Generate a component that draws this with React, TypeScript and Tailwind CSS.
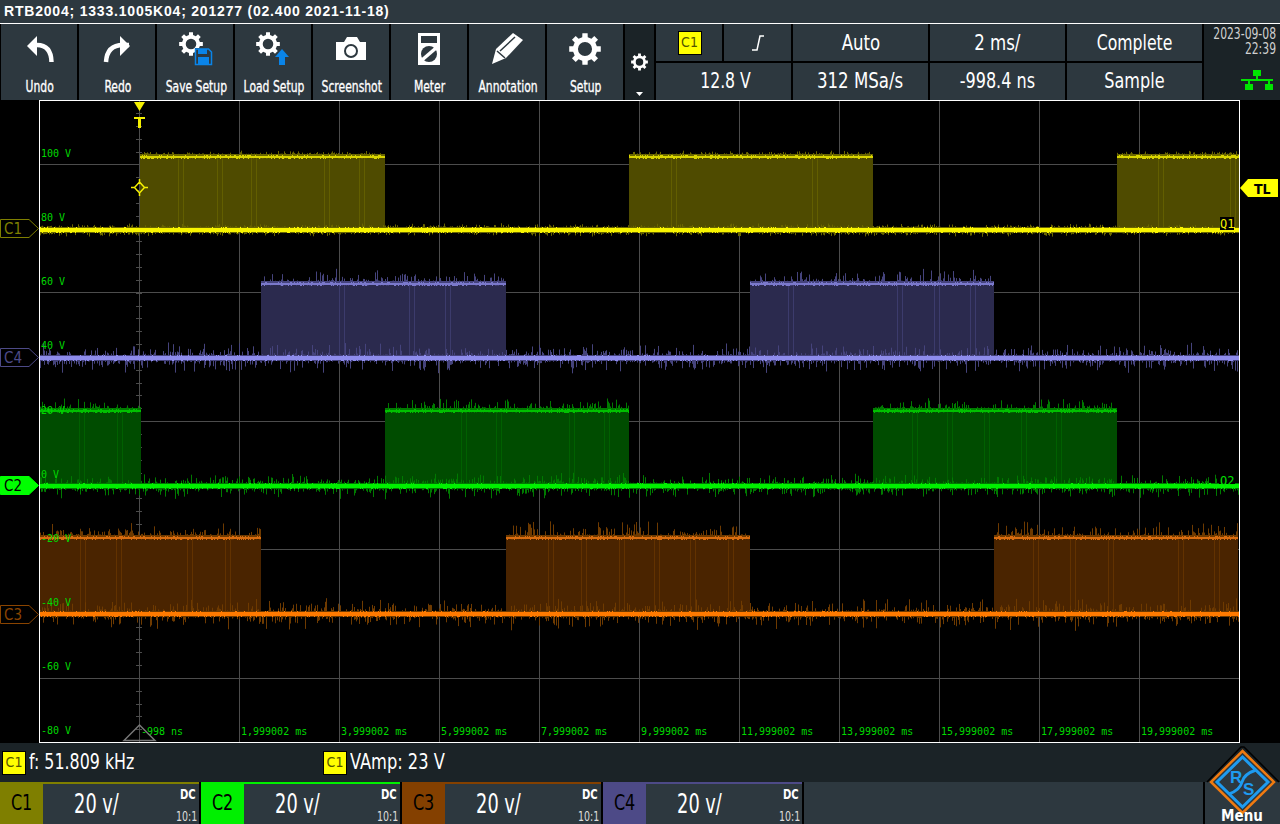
import React, { useMemo } from "react";

function rng(seed: number) {
  let s = seed >>> 0;
  return () => {
    s = (s * 1664525 + 1013904223) >>> 0;
    return s / 4294967296;
  };
}

type Trace = {
  seed: number;
  line: string;
  topLine: string;
  fill: string;
  stripe: string;
  dim: string;
  top: number;
  base: number;
  on: [number, number][];
  spike: number;
};

const TRACES: Trace[] = [
  { seed: 11, line: "#f8f400", topLine: "#d8d400", fill: "#4f4b00", stripe: "#625e00", dim: "#6a6600", top: 156, base: 230, on: [[140, 385], [629, 873], [1117, 1239]], spike: 4 },
  { seed: 47, line: "#8e8cec", topLine: "#7b79cc", fill: "#2b2a4e", stripe: "#3c3b6c", dim: "#45437c", top: 283, base: 358, on: [[261, 506], [750, 994]], spike: 13 },
  { seed: 83, line: "#00f000", topLine: "#00c000", fill: "#004c00", stripe: "#006000", dim: "#007a00", top: 410, base: 486, on: [[40, 141], [385, 629], [873, 1117]], spike: 11 },
  { seed: 131, line: "#ff7a00", topLine: "#d86c10", fill: "#4a2400", stripe: "#623200", dim: "#6e3a00", top: 537, base: 614, on: [[40, 261], [506, 750], [994, 1238]], spike: 14 },
];

function Wave({ t }: { t: Trace }) {
  const d = useMemo(() => {
    const r = rng(t.seed);
    let spikes = "";
    let base = "";
    let top = "";
    let stripes = "";
    const len = () => {
      const q = r();
      return q < 0.45 ? 2 + r() * r() * t.spike : 2;
    };
    for (let x = 40; x < 1239; x++) {
      spikes += `M${x + 0.5} ${t.base - 1 - len()}V${t.base + 1 + len()}`;
      base += `M${x + 0.5} ${t.base - 2 - (r() < 0.12 ? 1 : 0)}V${t.base + 2 + (r() < 0.2 ? 1 : 0)}`;
    }
    for (const [a, b] of t.on) {
      for (let x = a; x < b; x++) {
        spikes += `M${x + 0.5} ${t.top - len()}V${t.top + 1 + r() * 2}`;
        top += `M${x + 0.5} ${t.top - (r() < 0.25 ? 1 : 0)}V${t.top + 2 + (r() < 0.25 ? 1 : 0)}`;
      }
      for (let x = a + 38; x < b - 4; x += 36) {
        if (r() < 0.25) continue;
        const s = Math.round(x + r() * 4);
        stripes += `M${s + 0.5} ${t.top}V${t.base}M${s + 5.5} ${t.top}V${t.base}`;
      }
    }
    return { spikes, base, top, stripes };
  }, [t]);
  return (
    <g>
      {t.on.map(([a, b]) => (
        <rect key={a} x={a} y={t.top} width={b - a} height={t.base - t.top} fill={t.fill} />
      ))}
      <path d={d.stripes} stroke={t.stripe} strokeWidth={1} fill="none" />
      <path d={d.spikes} stroke={t.dim} strokeWidth={1} fill="none" />
      <path d={d.top} stroke={t.topLine} strokeWidth={1} fill="none" />
      <path d={d.base} stroke={t.line} strokeWidth={1} fill="none" />
    </g>
  );
}

function Plot() {
  const vs = [139, 239, 339, 439, 539, 639, 739, 839, 939, 1039, 1139];
  const hs = [164, 228, 292, 356, 421, 485, 549, 613, 678];
  const ticks: number[] = [];
  for (let y = 113; y < 742; y += 12.84) ticks.push(Math.round(y));
  const volts: [string, number][] = [["100 V", 157], ["80 V", 221], ["60 V", 285], ["40 V", 349], ["20 V", 414], ["0 V", 478], ["-20 V", 542], ["-40 V", 606], ["-60 V", 670], ["-80 V", 734]];
  const times: [string, number][] = [["-998 ns", 141], ["1,999002 ms", 241], ["3,999002 ms", 341], ["5,999002 ms", 441], ["7,999002 ms", 541], ["9,999002 ms", 641], ["11,999002 ms", 741], ["13,999002 ms", 841], ["15,999002 ms", 941], ["17,999002 ms", 1041], ["19,999002 ms", 1141]];
  return (
    <svg viewBox="40 101 1199 641" className="block w-[1199px] h-[641px]">
      {vs.map((x) => (
        <rect key={x} x={x} y={101} width={1} height={641} fill="#4c4c4c" />
      ))}
      {hs.map((y) => (
        <rect key={y} x={40} y={y} width={1200} height={1} fill="#4c4c4c" />
      ))}
      {ticks.map((y) => (
        <rect key={y} x={136} y={y} width={6} height={1} fill="#4c4c4c" />
      ))}
      {TRACES.map((t) => (
        <Wave key={t.seed} t={t} />
      ))}
      <g fontFamily="'DejaVu Sans Mono', monospace" fontSize={10} fill="#00d800">
        {volts.map(([s, y]) => (
          <text key={s} x={41} y={y}>{s}</text>
        ))}
        {times.map(([s, x]) => (
          <text key={s} x={x} y={735}>{s}</text>
        ))}
      </g>
      <path d="M134 102H145L139.500 111Z" fill="#f4f000" />
      <path d="M134 117H145V119H141V128H138V119H134Z" fill="#f4f000" />
      <path d="M139.500 182L144.500 187.500L139.500 193L134.500 187.500Z M139.500 179V182M139.500 193V196M131 187.500H134.500M144.500 187.500H148" fill="none" stroke="#f4f000" strokeWidth={1.500} />
      <path d="M124 740.500L139.500 725L155 740.500Z" fill="none" stroke="#777" strokeWidth={1.500} />
      <rect x={1220} y={217} width={14} height={13} fill="#000" />
      <text x={1220} y={228} fontFamily="'DejaVu Sans Mono', monospace" fontSize={12} fill="#f4f000">Q1</text>
      <rect x={1219} y={475} width={16} height={9} fill="#000" />
      <text x={1220} y={485} fontFamily="'DejaVu Sans Mono', monospace" fontSize={12} fill="#00e000">Q2</text>
    </svg>
  );
}

function gearPath(cx: number, cy: number, R: number, r: number, hole: number, n = 8) {
  let d = "";
  const w = Math.PI / n;
  for (let i = 0; i < n; i++) {
    const a = (i * 2 * Math.PI) / n - Math.PI / 2;
    const pts: [number, number][] = [
      [r, a - w * 0.58],
      [R, a - w * 0.42],
      [R, a + w * 0.42],
      [r, a + w * 0.58],
    ];
    for (const [q, t] of pts) {
      d += `${d ? "L" : "M"}${(cx + q * Math.cos(t)).toFixed(2)} ${(cy + q * Math.sin(t)).toFixed(2)}`;
    }
  }
  d += `ZM${cx + hole} ${cy}A${hole} ${hole} 0 1 0 ${cx - hole} ${cy}A${hole} ${hole} 0 1 0 ${cx + hole} ${cy}Z`;
  return d;
}

function Gear({ cx, cy, R }: { cx: number; cy: number; R: number }) {
  return <path d={gearPath(cx, cy, R, R * 0.76, R * 0.44)} fill="#fff" fillRule="evenodd" />;
}

const BLUE = "#0a84e8";
const ICONS: Record<string, React.ReactNode> = {
  Undo: (
    <>
      <path d="M30 21H36Q50 21 50.500 38" fill="none" stroke="#fff" strokeWidth={4.500} />
      <path d="M26 22L36 12V32Z" fill="#fff" />
    </>
  ),
  Redo: (
    <>
      <path d="M50 21H44Q28 21 27 38" fill="none" stroke="#fff" strokeWidth={4.500} />
      <path d="M51 22L41 12V32Z" fill="#fff" />
    </>
  ),
  "Save Setup": (
    <>
      <Gear cx={34} cy={20} R={12} />
      <path d="M38 24H52L55 27V41H38Z" fill="#2d383f" />
      <path d="M38.500 25H51.500L54.500 28V40.500H38.500Z" fill="none" stroke={BLUE} strokeWidth={1.500} />
      <rect x={41} y={25} width={9} height={5} fill={BLUE} />
      <rect x={41} y={33} width={11} height={8} fill={BLUE} />
    </>
  ),
  "Load Setup": (
    <>
      <Gear cx={33} cy={20} R={12} />
      <path d="M47 25L54 33H50V41H44V33H40Z" fill={BLUE} />
    </>
  ),
  Screenshot: (
    <>
      <path d="M23 18H31L34 13H44L47 18H53V36H23Z" fill="#fff" />
      <circle cx={38} cy={27} r={6} fill="none" stroke="#2d383f" strokeWidth={2} />
    </>
  ),
  Meter: (
    <>
      <path d="M27 9H49V41H27Z" fill="#fff" />
      <rect x={30} y={12} width={16} height={7} fill="#2d383f" />
      <circle cx={38} cy={30} r={8} fill="#2d383f" />
      <path d="M31 36L45 24" stroke="#fff" strokeWidth={3.500} />
    </>
  ),
  Annotation: (
    <>
      <path d="M23 40L27 25L44 9L54 16L37 34Z" fill="#fff" />
      <path d="M31 27L46 13M28 27L36 34" fill="none" stroke="#2d383f" strokeWidth={1.500} />
    </>
  ),
  Setup: <Gear cx={38} cy={25} R={16} />,
};

const BTN_NAMES = ["Undo", "Redo", "Save Setup", "Load Setup", "Screenshot", "Meter", "Annotation", "Setup"];
const COND = "font-['DejaVu_Sans_Condensed','DejaVu_Sans',sans-serif]";

function ToolButton({ name }: { name: string }) {
  return (
    <div className="w-[76px] h-full bg-[#2d383f] flex flex-col items-center">
      <svg viewBox="0 0 76 50" className="block w-[76px] h-[50px]">{ICONS[name]}</svg>
      <div className={`${COND} mt-[1px] translate-x-[1px] text-white text-[15px] leading-[24px] whitespace-nowrap scale-x-[.8] [-webkit-text-stroke:0.3px_white]`}>{name}</div>
    </div>
  );
}

function Badge() {
  return (
    <span className={`${COND} w-[24px] h-[24px] shrink-0 bg-[#ffff00] border border-black text-[#555500] text-[14px] flex items-center justify-center`}>
      C1
    </span>
  );
}

function Cell({ w, children, className = "scale-x-[.88]" }: { w: string; children?: React.ReactNode; className?: string }) {
  return (
    <div className={`${w} h-full bg-[#2d383f] flex items-center justify-center text-white text-[21px] ${COND}`}>
      <span className={`whitespace-nowrap ${className}`}>{children}</span>
    </div>
  );
}

function Channel({ name, color }: { name: string; color: string }) {
  return (
    <div className="w-[199px] h-full flex flex-col" style={{ backgroundColor: color }}>
      <div className="h-[2px]" />
      <div className={`flex-1 flex ${COND}`}>
        <div className="w-[43px] flex items-center justify-center text-black text-[21px]">
          <span className="scale-x-[.85]">{name}</span>
        </div>
        <div className="flex-1 bg-[#2d383f] relative flex items-center justify-center text-white text-[26px] pr-[50px]">
          <span className="whitespace-nowrap scale-x-[.76]">20 v/</span>
          <span className="absolute right-[3px] top-[0px] text-[14px] font-bold leading-[20px] scale-x-[.8] origin-right">DC</span>
          <span className="absolute right-[2px] bottom-[-1px] text-[14px] leading-[18px] text-[#dddddd] scale-x-[.75] origin-right">10:1</span>
        </div>
      </div>
    </div>
  );
}

function Tag({ y, label, color, solid }: { y: number; label: string; color: string; solid?: boolean }) {
  return (
    <svg viewBox="0 0 40 19" className="absolute left-0 w-[40px] h-[19px]" style={{ top: y }}>
      <path d="M0.500 0.500H29L38.500 9.500L29 18.500H0.500Z" fill={solid ? color : "#000"} stroke={color} />
      <text x={4} y={15} fontSize={15} fontFamily="'DejaVu Sans Condensed', sans-serif" fill={solid ? "#000" : color}>{label}</text>
    </svg>
  );
}

export default function App() {
  return (
    <div className="relative w-[1280px] h-[824px] bg-black overflow-hidden flex flex-col">
      <div className="h-[24px] bg-[#2d383f] border-b border-white pl-[4px] font-['Liberation_Sans',sans-serif] font-bold text-[14px] leading-[23px] tracking-[0.8px] text-white whitespace-nowrap">
        RTB2004; 1333.1005K04; 201277 (02.400 2021-11-18)
      </div>

      <div className="h-[76px] flex gap-[2px] pl-[1px]">
        {BTN_NAMES.map((n) => (
          <ToolButton key={n} name={n} />
        ))}
        <div className="w-[29px] h-full bg-[#1b2327]">
          <svg viewBox="0 0 29 76" className="block w-[29px] h-[76px]">
            <Gear cx={14.500} cy={38} R={8.500} />
            <path d="M11 68H18L14.500 72Z" fill="#fff" />
          </svg>
        </div>
        <div className="flex-1 min-w-0 flex gap-[2px]">
          <div className="w-[546px] h-full flex flex-col gap-[2px]">
            <div className="h-[37px] flex gap-[2px]">
              <div className="w-[66px] h-full bg-[#2d383f] flex items-center justify-center pl-[1px]">
                <Badge />
              </div>
              <div className="w-[67px] h-full bg-[#2d383f] flex items-center justify-center">
                <svg viewBox="0 0 14 18" className="w-[14px] h-[18px]">
                  <path d="M1 16H6L9 2H13" fill="none" stroke="#fff" strokeWidth={1.500} />
                </svg>
              </div>
              <Cell w="w-[135px]" className="scale-x-[.88] translate-y-[1px]">Auto</Cell>
              <Cell w="w-[135px]" className="scale-x-[.88] translate-y-[1px]">2 ms/</Cell>
              <Cell w="w-[135px]" className="scale-x-[.83] translate-y-[1px]">Complete</Cell>
            </div>
            <div className="h-[37px] flex gap-[2px]">
              <Cell w="w-[135px]" className="scale-x-[.83] translate-x-[2px]">12.8 V</Cell>
              <Cell w="w-[135px]">312 MSa/s</Cell>
              <Cell w="w-[135px]" className="scale-x-[.85]">-998.4 ns</Cell>
              <Cell w="w-[135px]" className="scale-x-[.85]">Sample</Cell>
            </div>
          </div>
          <div className="flex-1 min-w-0 h-full bg-[#1b2327] flex flex-col">
            <div className={`${COND} w-[90px] ml-[-18px] text-[15px] leading-[15px] text-[#d0d0d0] pt-[3px] text-right scale-x-[.8] origin-right whitespace-nowrap`}>
              <div>2023-09-08</div>
              <div>22:39</div>
            </div>
            <svg viewBox="0 0 34 22" className="w-[34px] h-[22px] mt-[13px] ml-[37px]">
              <path d="M12 0H20V6H12ZM15 6H17V9H15ZM0 9H32V11H0ZM4 14H12V20H4ZM24 14H32V20H24ZM7 11H9V14H7ZM27 11H29V14H27Z" fill="#00e400" />
            </svg>
          </div>
        </div>
      </div>

      <div className="relative h-[643px]">
        <div className="absolute left-[39px] top-0 w-[1201px] h-[643px] border border-white bg-black">
          <Plot />
        </div>
        <Tag y={119} label="C1" color="#7f7f00" />
        <Tag y={248} label="C4" color="#4d4a87" />
        <Tag y={376} label="C2" color="#00ff00" solid />
        <Tag y={505} label="C3" color="#8a4400" />
        <svg viewBox="0 0 40 20" className="absolute left-[1240px] top-[78px] w-[40px] h-[20px]">
          <path d="M0 10L8 1H38V19H8Z" fill="#ffff00" />
          <text x={14} y={15.500} fontSize={14} fontWeight={700} fontFamily="'DejaVu Sans Condensed', sans-serif" fill="#000">TL</text>
        </svg>
      </div>

      <div className="h-[39px] bg-[#1b2327] flex items-center pl-[2px] text-white text-[21px]">
        <div className={`w-[321px] flex items-center gap-[3px] ${COND}`}>
          <Badge />
          <span className="whitespace-nowrap scale-x-[.84] origin-left">f: 51.809 kHz</span>
        </div>
        <div className={`flex items-center gap-[3px] ${COND}`}>
          <Badge />
          <span className="whitespace-nowrap scale-x-[.86] origin-left">VAmp: 23 V</span>
        </div>
      </div>

      <div className="h-[42px] flex gap-[2px]">
        <Channel name="C1" color="#7f7f00" />
        <Channel name="C2" color="#00f000" />
        <Channel name="C3" color="#844000" />
        <Channel name="C4" color="#4d4a87" />
        <div className="flex-1 bg-[#2d383f] flex justify-end">
          <div className="w-[77px] bg-[#2d383f] border-l-2 border-black" />
        </div>
      </div>

      <svg viewBox="1204 743 76 81" className="absolute left-[1204px] top-[743px] w-[76px] h-[81px]">
        <path d="M1207 782L1241 747H1244L1279 782" fill="#1b2327" stroke="#000" strokeWidth={1.500} />
        <path d="M1242.500 751L1274 782L1242.500 813L1211 782Z" fill="#2d383f" stroke="#f07a10" strokeWidth={2.500} />
        <path d="M1242.500 757L1268 782L1242.500 807L1217 782Z" fill="none" stroke="#1e9bf0" strokeWidth={3} />
        <path d="M1229 794Q1240 790 1242 782Q1244 774 1256 770" fill="none" stroke="#1e9bf0" strokeWidth={3} />
        <text x={1230} y={783} fontSize={17} fontWeight={700} fontFamily="'Liberation Sans', sans-serif" fill="#1e9bf0">R</text>
        <text x={1243} y={795} fontSize={17} fontWeight={700} fontFamily="'Liberation Sans', sans-serif" fill="#1e9bf0">S</text>
        <text x={1242} y={821} textAnchor="middle" fontSize={15} fontWeight={700} fontFamily="'DejaVu Sans Condensed', sans-serif" fill="#fff">Menu</text>
      </svg>
    </div>
  );
}
